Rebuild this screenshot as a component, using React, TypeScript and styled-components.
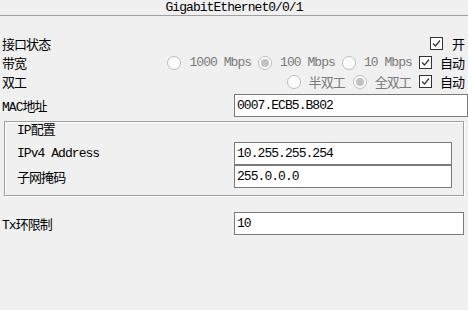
import React from 'react';
import styled, { createGlobalStyle } from 'styled-components';

const GlobalStyle = createGlobalStyle`
  html, body {
    margin: 0;
    padding: 0;
    background: #f0f0f0;
  }
  body {
    font-family: 'Liberation Mono', 'Noto Sans CJK SC', monospace;
    font-size: 13px;
    letter-spacing: -0.95px;
    color: #000;
  }
`;

const Window = styled.div`
  width: 468px;
  height: 310px;
  overflow: hidden;
  background: #f0f0f0;
`;

const TitleBar = styled.div`
  height: 15px;
  line-height: 15px;
  text-align: center;
  border-bottom: 1px solid #a0a0a0;
`;

const Form = styled.div`
  display: flex;
  flex-direction: column;
  padding-top: 18px;
`;

const Row = styled.div<{ $top?: number }>`
  display: grid;
  grid-template-columns: 234px 1fr;
  align-items: center;
  height: 23px;
  margin-top: ${(p) => p.$top ?? 0}px;
`;

const ControlRow = styled.div`
  display: flex;
  align-items: center;
  justify-content: space-between;
  height: 19px;
`;

const Label = styled.div`
  padding-left: 2px;
  white-space: nowrap;
`;

const Controls = styled.div<{ $gap?: number }>`
  display: flex;
  align-items: center;
  justify-content: flex-end;
  gap: ${(p) => p.$gap ?? 7}px;
  padding-right: 4px;
  white-space: nowrap;
`;

const Option = styled.label<{ $disabled?: boolean; $gap?: number }>`
  display: inline-flex;
  align-items: center;
  gap: ${(p) => p.$gap ?? 8}px;
  color: ${(p) => (p.$disabled ? '#7a7a7a' : '#000')};
`;

const RadioCircle = styled.span<{ $checked?: boolean }>`
  box-sizing: border-box;
  width: 14px;
  height: 14px;
  border-radius: 50%;
  border: 1px solid #bcbcbc;
  background: #fcfcfc;
  display: inline-flex;
  align-items: center;
  justify-content: center;
  &::after {
    content: '';
    width: 8px;
    height: 8px;
    border-radius: 50%;
    background: ${(p) => (p.$checked ? '#c2c2c2' : 'transparent')};
  }
`;

const CheckBox = styled.span`
  box-sizing: border-box;
  width: 13px;
  height: 13px;
  border: 1px solid #333;
  background: #fff;
  display: inline-flex;
  align-items: center;
  justify-content: center;
`;

const Input = styled.div<{ $width: number }>`
  box-sizing: border-box;
  width: ${(p) => p.$width}px;
  height: 23px;
  line-height: 21px;
  padding-left: 2px;
  background: #fff;
  border: 1px solid #7a7a7a;
  white-space: nowrap;
`;

const Group = styled.div`
  box-sizing: border-box;
  margin: 4px 0 0 4px;
  width: 460px;
  height: 75px;
  padding: 0 10px 0 12px;
  border: 1px solid #a0a0a0;
  box-shadow: inset 1px 1px 0 #fff, 1px 1px 0 #fff;
`;

const GroupTitle = styled.div`
  height: 18px;
  line-height: 18px;
  margin-bottom: 2px;
`;

const GroupRow = styled.div`
  display: grid;
  grid-template-columns: 217px 1fr;
  align-items: center;
  height: 23px;
`;

const GroupLabel = styled.div`
  white-space: nowrap;
`;

const Check = () => (
  <CheckBox>
    <svg width="11" height="11" viewBox="0 0 11 11">
      <path d="M2 5.5 L4.5 8 L9 2.5" fill="none" stroke="#333" strokeWidth="1.2" />
    </svg>
  </CheckBox>
);

const Radio = ({ checked, text }: { checked?: boolean; text: string }) => (
  <Option $disabled>
    <RadioCircle $checked={checked} />
    {text}
  </Option>
);

const Auto = ({ text }: { text: string }) => (
  <Option $gap={8}>
    <Check />
    {text}
  </Option>
);

export default function App() {
  return (
    <>
      <GlobalStyle />
      <Window>
        <TitleBar>GigabitEthernet0/0/1</TitleBar>
        <Form>
          <ControlRow>
            <Label>接口状态</Label>
            <Controls>
              <Option $gap={9}>
                <Check />开
              </Option>
            </Controls>
          </ControlRow>
          <ControlRow>
            <Label>带宽</Label>
            <Controls>
              <Radio text="1000 Mbps" />
              <Radio checked text="100 Mbps" />
              <Radio text="10 Mbps" />
              <Auto text="自动" />
            </Controls>
          </ControlRow>
          <ControlRow>
            <Label>双工</Label>
            <Controls $gap={8}>
              <Radio text="半双工" />
              <Radio checked text="全双工" />
              <Auto text="自动" />
            </Controls>
          </ControlRow>
          <Row $top={3}>
            <Label>MAC地址</Label>
            <Input $width={234}>0007.ECB5.B802</Input>
          </Row>
          <Group>
            <GroupTitle>IP配置</GroupTitle>
            <GroupRow>
              <GroupLabel>IPv4 Address</GroupLabel>
              <Input $width={218}>10.255.255.254</Input>
            </GroupRow>
            <GroupRow>
              <GroupLabel>子网掩码</GroupLabel>
              <Input $width={218}>255.0.0.0</Input>
            </GroupRow>
          </Group>
          <Row $top={16}>
            <Label>Tx环限制</Label>
            <Input $width={230}>10</Input>
          </Row>
        </Form>
      </Window>
    </>
  );
}
